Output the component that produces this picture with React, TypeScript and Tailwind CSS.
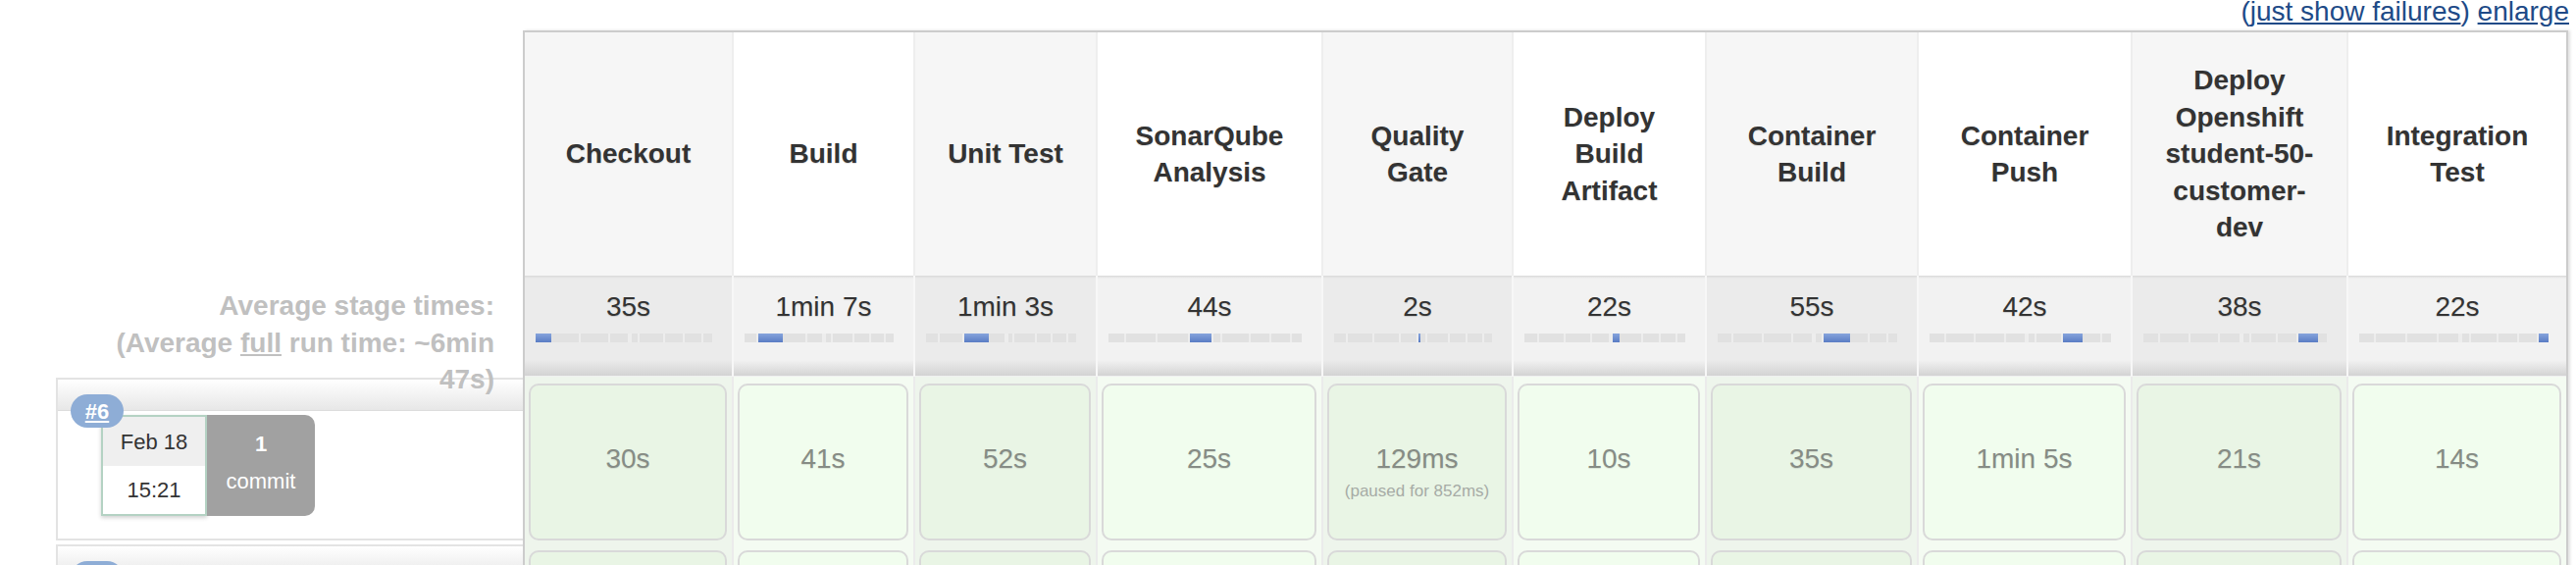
import React from "react";

interface Stage {
  name: string;
  avg: string;
  run: string;
  paused?: string;
}

const stages: Stage[] = [
  { name: "Checkout", avg: "35s", run: "30s" },
  { name: "Build", avg: "1min 7s", run: "41s" },
  { name: "Unit Test", avg: "1min 3s", run: "52s" },
  { name: "SonarQube Analysis", avg: "44s", run: "25s" },
  { name: "Quality Gate", avg: "2s", run: "129ms", paused: "(paused for 852ms)" },
  { name: "Deploy Build Artifact", avg: "22s", run: "10s" },
  { name: "Container Build", avg: "55s", run: "35s" },
  { name: "Container Push", avg: "42s", run: "1min 5s" },
  { name: "Deploy Openshift student-50-customer-dev", avg: "38s", run: "21s" },
  { name: "Integration Test", avg: "22s", run: "14s" },
];

// cumulative share of the full run taken by each stage
const bounds = [0, 0.09, 0.255, 0.42, 0.535, 0.545, 0.59, 0.735, 0.845, 0.95, 1];

const runs = [
  { num: "#6", date: "Feb 18", time: "15:21", commits: "1" },
  { num: "#5", date: "Feb 18", time: "14:52", commits: "1" },
];

function TimeBar({ active, last }: { active: number; last: boolean }) {
  return (
    <div className={`mt-[8px] ml-[11px] flex h-[9px] bg-[#e1e1e1] ${last ? "mr-[18px]" : "mr-[20px]"}`}>
      {bounds.slice(1).map((b, i) => (
        <div
          key={i}
          style={{ width: `${(b - bounds[i]) * 100}%` }}
          className={
            i === active
              ? "h-full bg-gradient-to-b from-[#86a4dc] to-[#5a7cc4]"
              : "h-full border-r-2 border-[#ededed] last:border-r-0"
          }
        />
      ))}
    </div>
  );
}

function RunLabel({ num, date, time, commits }: { num: string; date: string; time: string; commits: string }) {
  return (
    <div className="h-[170px] pl-[57px] pt-px">
      <div className="relative h-[166px] border-2 border-r-0 border-[#e3e3e3] bg-white">
        <div className="h-[32px] border-b border-[#dddddd] bg-gradient-to-b from-white to-[#e7e7e7]" />
        <a className="absolute left-[13px] top-[15px] flex h-[34px] w-[54px] items-center justify-center rounded-full bg-[#8eadd6] text-[22px] font-bold text-white underline">
          {num}
        </a>
        <div className="ml-[44px] mt-[4px] flex">
          <div className="flex h-[103px] w-[108px] flex-col border-2 border-[#b4d2c3] text-[22px] text-[#333] shadow-[0_2px_4px_rgba(0,0,0,0.18)]">
            <div className="flex h-[50px] items-center justify-center bg-[#efefef]">{date}</div>
            <div className="flex flex-1 items-center justify-center bg-white">{time}</div>
          </div>
          <div className="flex h-[103px] w-[110px] flex-col items-center justify-center rounded-r-[10px] bg-[#a1a1a1] pb-[6px] text-[22px] leading-[37.5px] text-white">
            <span className="font-bold">{commits}</span>
            <span>commit</span>
          </div>
        </div>
      </div>
    </div>
  );
}

export default function App() {
  return (
    <div className="h-[576px] w-[2626px] overflow-hidden bg-white font-['Liberation_Sans',Arial,sans-serif]">
      {/* top links */}
      <div className="-mt-[2px] flex h-[33px] justify-end pr-[7px] text-[28px] leading-[28px] text-[#204a87]">
        <span>
          (<a className="underline">just show failures</a>) <a className="underline">enlarge</a>
        </span>
      </div>

      <div className="flex">
        {/* left column: totals + run labels */}
        <div className="w-[533px] shrink-0">
          <div className="h-[250px]" />
          <div className="relative z-10 h-[103px] pl-[100px] pr-[29px] pt-[12px] text-right text-[28px] font-bold leading-[37.5px] text-[#c0c0c0]">
            <div>Average stage times:</div>
            <div>
              (Average <span className="underline">full</span> run time: ~6min 47s)
            </div>
          </div>
          {runs.map((r) => (
            <RunLabel key={r.num} {...r} />
          ))}
        </div>

        {/* stage table */}
        <div className="grid grid-cols-[211px_185px_186px_230px_194px_197px_216px_218px_220px_224px] grid-rows-[248px_103px_170px_170px] border-2 border-b-0 border-[#cccccc] shadow-[2px_0_3px_rgba(0,0,0,0.12)]">
          {stages.map((s, i) => (
            <div
              key={"h" + i}
              className={`flex items-center justify-center px-6 text-center text-[28px] font-bold leading-[37.5px] text-[#333] [text-shadow:0_1px_1px_rgba(0,0,0,0.12)] ${
                i > 0 ? "border-l-2 border-[#eeeeee]" : ""
              } ${i % 2 === 0 ? "bg-[#f6f6f6]" : "bg-white"}`}
            >
              {s.name}
            </div>
          ))}

          {stages.map((s, i) => (
            <div
              key={"a" + i}
              className={`flex flex-col ${i > 0 ? "border-l-2 border-[#f7f7f7]" : ""} ${
                i % 2 === 0 ? "bg-[#ebebeb]" : "bg-[#f2f2f2]"
              }`}
            >
              <div className="h-[3px] bg-gradient-to-b from-[#d9d9d9] to-transparent" />
              <div className="pt-[10px] text-center text-[28px] leading-[37.5px] text-[#333] [text-shadow:0_1px_1px_rgba(0,0,0,0.15)]">
                {s.avg}
              </div>
              <TimeBar active={i} last={i === stages.length - 1} />
              <div className="mt-auto h-[16px] bg-gradient-to-b from-transparent to-[#d3d3d3]" />
              <div className="h-px bg-[#f0f0f0]" />
            </div>
          ))}

          {runs.map((r) =>
            stages.map((s, i) => (
              <div
                key={r.num + i}
                className={`pl-[4px] pr-[5px] pt-[7px] ${i > 0 ? "border-l-2 border-[#ebebeb]" : ""} ${
                  i % 2 === 0 ? "bg-[#eef5ec]" : "bg-[#f4fbf2]"
                }`}
              >
                <div
                  className={`relative flex h-[160px] items-center justify-center rounded-[10px] border-2 border-[#d9d9d9] pb-[6px] ${
                    i % 2 === 0 ? "bg-[#e9f5e5]" : "bg-[#f1fdee]"
                  }`}
                >
                  <span className="text-[28px] text-[#868c85] [text-shadow:0_1px_1px_rgba(0,0,0,0.1)]">{s.run}</span>
                  {s.paused && (
                    <span className="absolute inset-x-0 top-[98px] text-center text-[17px] leading-[20px] text-[#a6aba5]">
                      {s.paused}
                    </span>
                  )}
                </div>
              </div>
            ))
          )}
        </div>
      </div>
    </div>
  );
}
